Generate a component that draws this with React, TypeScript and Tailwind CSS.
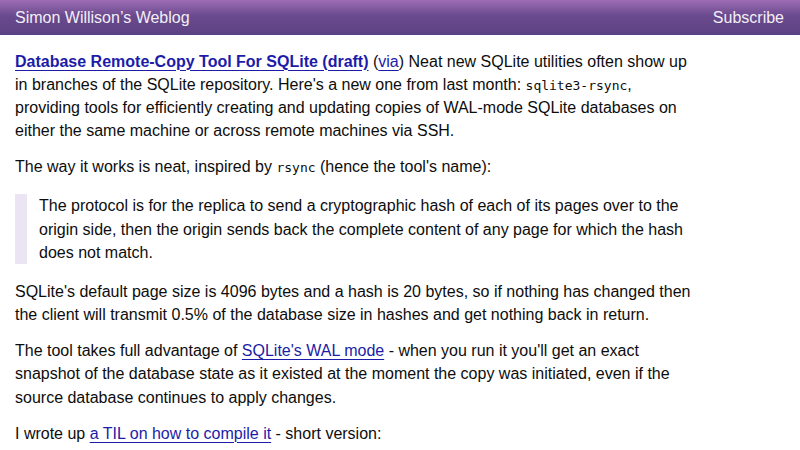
import React from 'react';

const linkCls = 'text-[#1c1ca8] underline decoration-1 underline-offset-[3px]';

const Code: React.FC<{ children: React.ReactNode }> = ({ children }) => (
  <code className="font-['DejaVu_Sans_Mono',monospace] text-[13px] leading-none">{children}</code>
);

export default function App() {
  return (
    <div className="min-h-[450px] bg-white font-['Liberation_Sans',Arial,sans-serif] text-[#0d0d0d]">
      <header className="h-[35px] flex items-center justify-between px-[15px] bg-[linear-gradient(to_bottom,#9d6cb4,#6a4a8e_45%,#5c4282)] text-[#f3eff7] text-[16px]">
        <span>Simon Willison’s Weblog</span>
        <span className="pr-px">Subscribe</span>
      </header>

      <main className="px-[15px] pt-[14.5px] max-w-[710px] text-[16px] leading-[23.2px]">
        <p className="mb-[12.8px]">
          <a href="#" className={`${linkCls} font-bold`}>Database Remote-Copy Tool For SQLite (draft)</a>{' '}
          (<a href="#" className={linkCls}>via</a>) Neat new SQLite utilities often show up in branches of the SQLite
          repository. Here's a new one from last month: <Code>sqlite3-rsync</Code>, providing tools for efficiently
          creating and updating copies of WAL-mode SQLite databases on either the same machine or across remote
          machines via SSH.
        </p>
        <p>
          The way it works is neat, inspired by <Code>rsync</Code> (hence the tool's name):
        </p>
        <blockquote className="my-[16px] border-l-[12px] border-[#ebe4f2] pl-[12px]">
          The protocol is for the replica to send a cryptographic hash of each of its pages over to the origin side,
          then the origin sends back the complete content of any page for which the hash does not match.
        </blockquote>
        <p className="mb-[12.8px]">
          SQLite's default page size is 4096 bytes and a hash is 20 bytes, so if nothing has changed then the client
          will transmit 0.5% of the database size in hashes and get nothing back in return.
        </p>
        <p className="mb-[12.8px]">
          The tool takes full advantage of <a href="#" className={linkCls}>SQLite's WAL mode</a> - when you run it
          you'll get an exact snapshot of the database state as it existed at the moment the copy was initiated, even
          if the source database continues to apply changes.
        </p>
        <p>
          I wrote up <a href="#" className={linkCls}>a TIL on how to compile it</a> - short version:
        </p>
      </main>
    </div>
  );
}
